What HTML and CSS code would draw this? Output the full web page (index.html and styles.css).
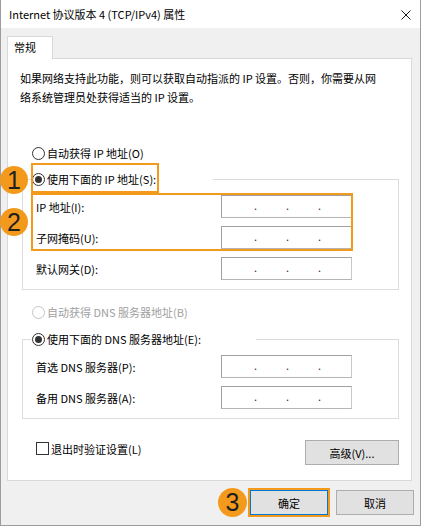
FILE: index.html
```html
<!DOCTYPE html>
<html lang="zh-CN">
<head>
    <meta charset="UTF-8">
    <title>Internet 协议版本 4 (TCP/IPv4) 属性</title>
    <link rel="stylesheet" href="styles.css">
</head>
<body>
    <div class="window">
        <div class="titlebar">
            <span class="title">Internet 协议版本 4 (TCP/IPv4) 属性</span>
            <svg class="close" width="10" height="10" viewBox="0 0 10 10"><path d="M0.5 0.5 L9.5 9.5 M9.5 0.5 L0.5 9.5" stroke="#1a1a1a" stroke-width="1" fill="none"/></svg>
        </div>

        <div class="dialog">
            <div class="tabs"><span class="tab">常规</span></div>
            <div class="panel">
                <p class="desc">如果网络支持此功能，则可以获取自动指派的 IP 设置。否则，你需要从网<br>络系统管理员处获得适当的 IP 设置。</p>

                <div class="opt opt-ip-auto"><span class="radio"></span>自动获得 IP 地址(O)</div>
                <div class="group group-ip">
                    <div class="group-title ip-title">
                        <div class="opt"><span class="radio checked"></span>使用下面的 IP 地址(S):</div>
                        <span class="mark mark-1"></span>
                        <span class="badge badge-1">1</span>
                    </div>
                    <div class="marked">
                        <div class="field">
                            <span>IP 地址(I):</span>
                            <div class="ip-box"><span>.</span><span>.</span><span>.</span></div>
                        </div>
                        <div class="field">
                            <span>子网掩码(U):</span>
                            <div class="ip-box"><span>.</span><span>.</span><span>.</span></div>
                        </div>
                        <span class="mark mark-2"></span>
                        <span class="badge badge-2">2</span>
                    </div>
                    <div class="field">
                        <span>默认网关(D):</span>
                        <div class="ip-box"><span>.</span><span>.</span><span>.</span></div>
                    </div>
                </div>

                <div class="opt opt-dns-auto disabled"><span class="radio"></span>自动获得 DNS 服务器地址(B)</div>
                <div class="group group-dns">
                    <div class="group-title dns-title">
                        <div class="opt"><span class="radio checked"></span>使用下面的 DNS 服务器地址(E):</div>
                    </div>
                    <div class="field first">
                        <span>首选 DNS 服务器(P):</span>
                        <div class="ip-box"><span>.</span><span>.</span><span>.</span></div>
                    </div>
                    <div class="field">
                        <span>备用 DNS 服务器(A):</span>
                        <div class="ip-box"><span>.</span><span>.</span><span>.</span></div>
                    </div>
                </div>

                <div class="panel-bottom">
                    <div class="check"><span class="checkbox"></span>退出时验证设置(L)</div>
                    <button class="btn btn-advanced">高级(V)...</button>
                </div>
            </div>
        </div>

        <div class="footer">
            <span class="ok-wrap">
                <button class="btn btn-ok">确定</button>
                <span class="badge badge-3">3</span>
            </span>
            <button class="btn">取消</button>
        </div>
    </div>
</body>
</html>
```

FILE: styles.css
```css
body {
    margin: 0;
    font-family: "Noto Sans CJK SC", "Noto Sans", sans-serif;
    font-size: 11px;
    color: #000;
    background: #fff;
}
.window {
    position: relative;
    width: 421px;
    height: 526px;
    box-sizing: border-box;
    border: 1px solid #9c9c9c;
    border-top: none;
    background: #f0f0f0;
}
.titlebar {
    height: 28px;
    display: flex;
    align-items: center;
    justify-content: space-between;
    padding: 0 9px 0 8px;
    background: #fff;
}
.title {
    line-height: 28px;
    margin-top: -1px;
}
.close {
    display: block;
    margin-top: 1px;
}
.dialog {
    padding: 8px 0 0 6px;
}
.tabs {
    height: 22px;
}
.tab {
    position: relative;
    z-index: 1;
    display: block;
    width: 46px;
    height: 23px;
    box-sizing: border-box;
    padding-left: 6px;
    line-height: 21px;
    background: #fff;
    border: 1px solid #d9d9d9;
    border-bottom: none;
}
.panel {
    width: 405px;
    height: 423px;
    box-sizing: border-box;
    border: 1px solid #d9d9d9;
    background: #fff;
}
.desc {
    margin: 0;
    padding: 10px 0 0 12px;
    line-height: 19px;
    white-space: nowrap;
}

/* radio rows */
.opt {
    display: flex;
    align-items: center;
    height: 20px;
    line-height: 20px;
    white-space: nowrap;
}
.opt-ip-auto {
    margin: 36px 0 0 24px;
}
.opt-dns-auto {
    margin: 12px 0 0 24px;
}
.opt.disabled {
    color: #a0a0a0;
}
.radio {
    width: 13px;
    height: 13px;
    box-sizing: border-box;
    border: 1px solid #333;
    border-radius: 50%;
    margin-right: 2px;
    position: relative;
    background: #fff;
}
.radio.checked::after {
    content: "";
    position: absolute;
    left: 2px;
    top: 2px;
    width: 7px;
    height: 7px;
    border-radius: 50%;
    background: #333;
}
.disabled .radio {
    border-color: #c4c4c4;
}

/* group boxes */
.group {
    width: 377px;
    box-sizing: border-box;
    margin-left: 14px;
    border: 1px solid #dcdcdc;
    padding-bottom: 9px;
}
.group-ip {
    margin-top: 16px;
}
.group-dns {
    margin-top: 17px;
}
.group-title {
    position: relative;
    margin: -11px 0 6px 8px;
    padding-left: 1px;
    background: #fff;
}
.ip-title {
    width: 181px;
}
.dns-title {
    width: 224px;
}
.marked {
    position: relative;
}
.field {
    display: flex;
    align-items: center;
    justify-content: space-between;
    height: 23px;
    margin: 8px 46px 0 13px;
}
.marked .field:first-child,
.field.first {
    margin-top: 0;
}
.ip-box {
    display: flex;
    gap: 29px;
    width: 131px;
    height: 23px;
    box-sizing: border-box;
    padding-left: 32px;
    border: 1px solid #a0a0a0;
    border-right-color: #c8c8c8;
    border-bottom-color: #b4b4b4;
    line-height: 19px;
    background: #fff;
}
.ip-box span {
    width: 3px;
    color: #333;
}

/* bottom of panel */
.panel-bottom {
    display: flex;
    align-items: flex-start;
    justify-content: space-between;
    margin-top: 21px;
    padding: 0 12px 0 28px;
}
.check {
    display: flex;
    align-items: center;
    height: 17px;
}
.checkbox {
    width: 13px;
    height: 13px;
    box-sizing: border-box;
    border: 1px solid #333;
    background: #fff;
    margin-right: 2px;
}
.btn {
    width: 78px;
    height: 25px;
    padding: 0;
    font-family: inherit;
    font-size: 11px;
    color: #000;
    background: #e1e1e1;
    border: 1px solid #adadad;
}
.btn-advanced {
    width: 94px;
}
.footer {
    display: flex;
    justify-content: flex-end;
    gap: 8px;
    padding: 9px 6px 0 0;
}
.ok-wrap {
    position: relative;
    display: block;
}
.btn-ok {
    display: block;
    border-color: #0078d7;
    outline: 2px solid #f39a1d;
}

/* annotations */
.mark {
    position: absolute;
    box-sizing: border-box;
    border: 2px solid #f39a1d;
}
.mark-1 {
    left: 0;
    top: -6px;
    width: 128px;
    height: 30px;
}
.mark-2 {
    left: 8px;
    top: -2px;
    width: 322px;
    height: 58px;
}
.badge {
    position: absolute;
    z-index: 2;
    width: 28px;
    height: 28px;
    border-radius: 50%;
    background: #f39a1d;
    color: #1f1f1f;
    font-family: "Liberation Sans", Arial, sans-serif;
    font-size: 25px;
    line-height: 28px;
    text-align: center;
}
.badge-1 {
    left: -31px;
    top: -3px;
}
.badge-2 {
    left: -23px;
    top: 13px;
}
.badge-3 {
    left: -32px;
    top: -2px;
    width: 29px;
    height: 29px;
    line-height: 29px;
}
```
